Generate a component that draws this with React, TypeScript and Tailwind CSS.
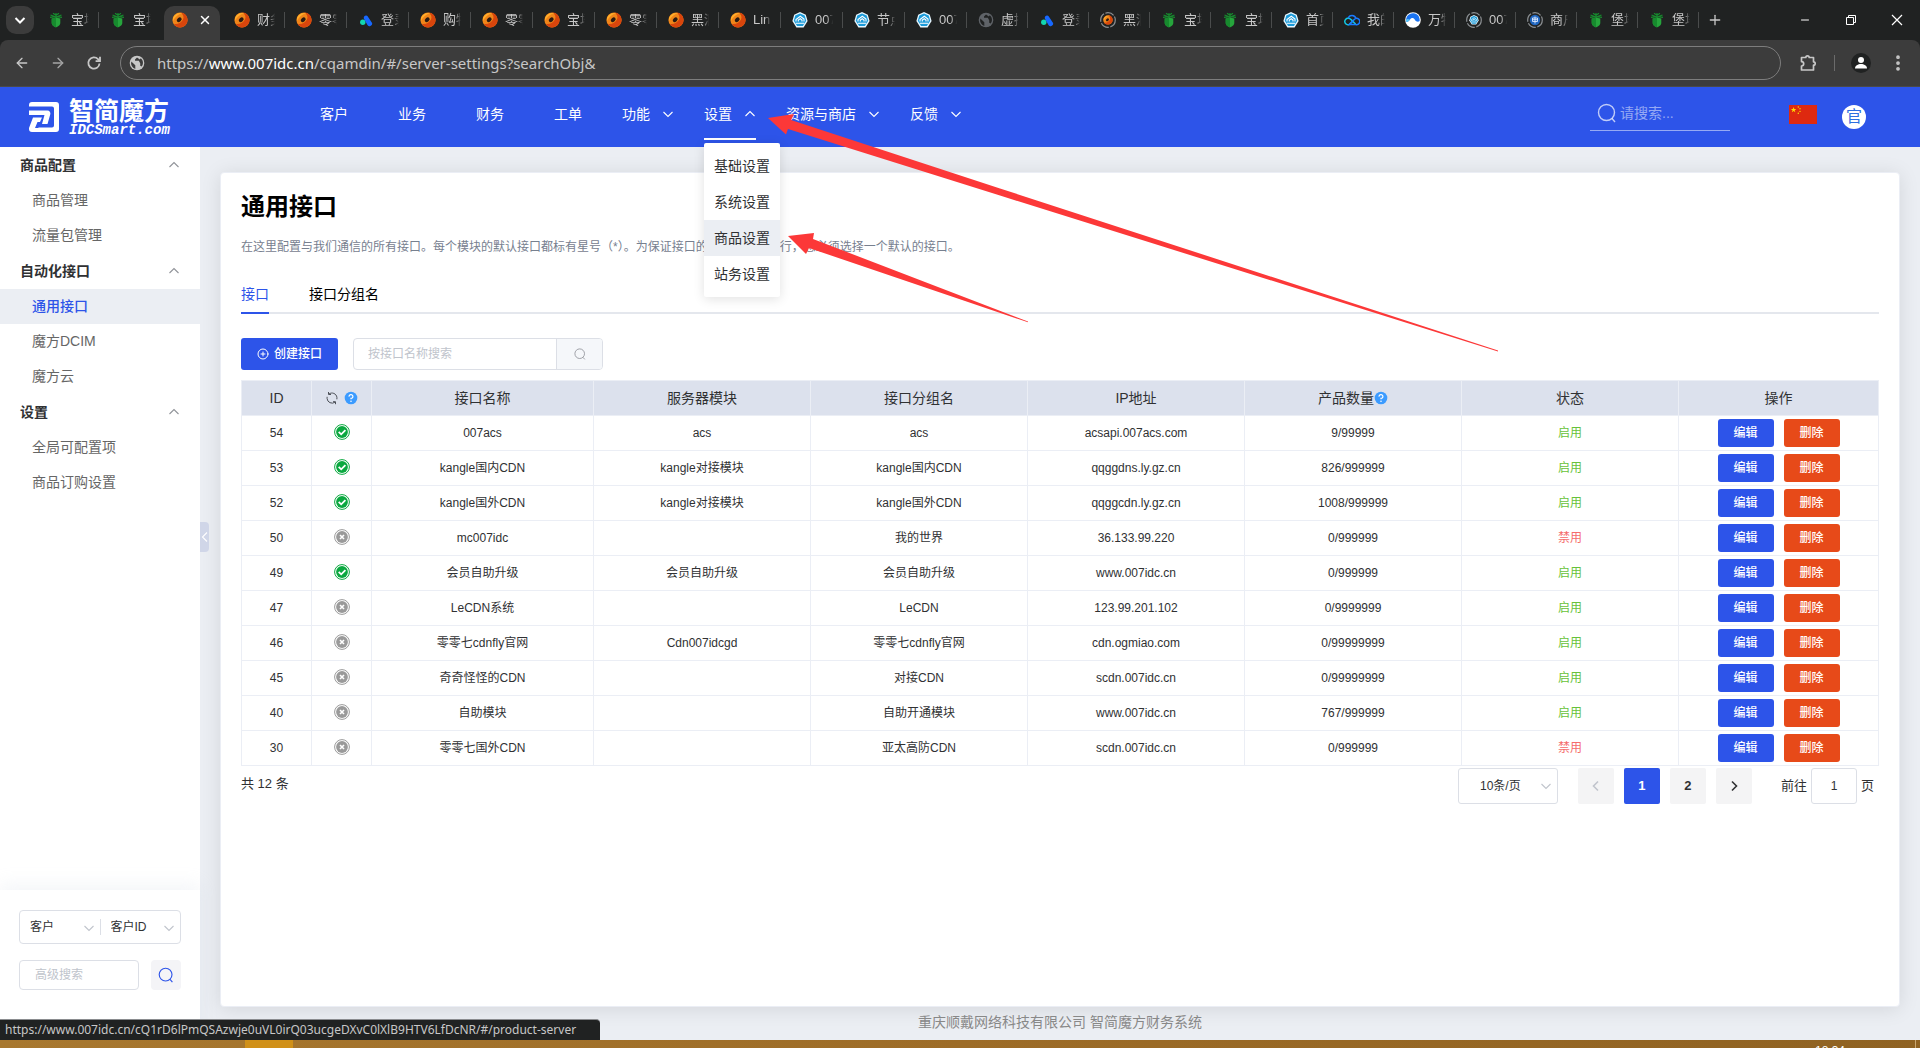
import React, { useState } from 'react';
import { ArrowLeft, ArrowRight, CirclePlus, EllipsisVertical, Minus, Plus, X } from 'lucide-react';

type IconKind =
  | 'bt'
  | 'ring'
  | 'peaks'
  | 'hex'
  | 'globe'
  | 'cloud'
  | 'wave'
  | 'ringDark'
  | 'hexDark'
  | 'gridDark';

const browserTabs: { icon: IconKind; title: string; active?: boolean }[] = [
  { icon: 'bt', title: '宝塔' },
  { icon: 'bt', title: '宝塔' },
  { icon: 'ring', title: '', active: true },
  { icon: 'ring', title: '财务' },
  { icon: 'ring', title: '零零' },
  { icon: 'peaks', title: '登录' },
  { icon: 'ring', title: '购物' },
  { icon: 'ring', title: '零零' },
  { icon: 'ring', title: '宝塔' },
  { icon: 'ring', title: '零零' },
  { icon: 'ring', title: '黑洞' },
  { icon: 'ring', title: 'Lin' },
  { icon: 'hex', title: '007' },
  { icon: 'hex', title: '节点' },
  { icon: 'hex', title: '007' },
  { icon: 'globe', title: '虚拟' },
  { icon: 'peaks', title: '登录' },
  { icon: 'ringDark', title: '黑洞' },
  { icon: 'bt', title: '宝塔' },
  { icon: 'bt', title: '宝塔' },
  { icon: 'hex', title: '首页' },
  { icon: 'cloud', title: '我的' },
  { icon: 'wave', title: '万物' },
  { icon: 'hexDark', title: '007' },
  { icon: 'gridDark', title: '商户' },
  { icon: 'bt', title: '堡塔' },
  { icon: 'bt', title: '堡塔' },
];

const simpleNav = ['客户', '业务', '财务', '工单'];
const menuNav = ['功能', '设置', '资源与商店', '反馈'];
const settingsMenu = ['基础设置', '系统设置', '商品设置', '站务设置'];

const sidebar = [
  { title: '商品配置', items: ['商品管理', '流量包管理'] },
  { title: '自动化接口', items: ['通用接口', '魔方DCIM', '魔方云'] },
  { title: '设置', items: ['全局可配置项', '商品订购设置'] },
];

const rows = [
  { id: 54, ok: true, name: '007acs', module: 'acs', group: 'acs', ip: 'acsapi.007acs.com', count: '9/99999', enabled: true },
  { id: 53, ok: true, name: 'kangle国内CDN', module: 'kangle对接模块', group: 'kangle国内CDN', ip: 'qqggdns.ly.gz.cn', count: '826/999999', enabled: true },
  { id: 52, ok: true, name: 'kangle国外CDN', module: 'kangle对接模块', group: 'kangle国外CDN', ip: 'qqggcdn.ly.gz.cn', count: '1008/999999', enabled: true },
  { id: 50, ok: false, name: 'mc007idc', module: '', group: '我的世界', ip: '36.133.99.220', count: '0/999999', enabled: false },
  { id: 49, ok: true, name: '会员自助升级', module: '会员自助升级', group: '会员自助升级', ip: 'www.007idc.cn', count: '0/999999', enabled: true },
  { id: 47, ok: false, name: 'LeCDN系统', module: '', group: 'LeCDN', ip: '123.99.201.102', count: '0/9999999', enabled: true },
  { id: 46, ok: false, name: '零零七cdnfly官网', module: 'Cdn007idcgd', group: '零零七cdnfly官网', ip: 'cdn.ogmiao.com', count: '0/99999999', enabled: true },
  { id: 45, ok: false, name: '奇奇怪怪的CDN', module: '', group: '对接CDN', ip: 'scdn.007idc.cn', count: '0/99999999', enabled: true },
  { id: 40, ok: false, name: '自助模块', module: '', group: '自助开通模块', ip: 'www.007idc.cn', count: '767/999999', enabled: true },
  { id: 30, ok: false, name: '零零七国外CDN', module: '', group: '亚太高防CDN', ip: 'scdn.007idc.cn', count: '0/999999', enabled: false },
];

const chevronPaths = {
  down: 'M1.500 4L6 8.500 10.500 4',
  up: 'M1.500 8L6 3.500 10.500 8',
  left: 'M8 1.500L3.500 6 8 10.500',
  right: 'M4 1.500L8.500 6 4 10.500',
};

function Chevron({ dir, className = '', weight = 1.1 }: { dir: keyof typeof chevronPaths; className?: string; weight?: number }) {
  return (
    <svg viewBox="0 0 12 12" className={`h-3 w-3 shrink-0 ${className}`} fill="none" stroke="currentColor" strokeWidth={weight} aria-hidden="true">
      <path d={chevronPaths[dir]} />
    </svg>
  );
}

function OrangeRing() {
  return (
    <>
      <ellipse cx="8" cy="8" rx="7.600" ry="7.400" fill="#f08519" />
      <path d="M8 .6c4.500 0 7.600 3.200 7.600 7.400S12 15.400 8 15.400c-2.500 0-5-1.200-6-3.400 4 .6 7.500-1.500 9-4.500 1.200-2.600.2-5.400-3-6.900z" fill="#d8450c" />
      <path d="M1 6C2.500 2 7 .5 10.500 1.300 7 2 3 4.500 1.200 9z" fill="#ffae2b" />
      <ellipse cx="7.200" cy="7.800" rx="2.700" ry="2" transform="rotate(-40 7.200 7.800)" fill="#2b1a12" />
    </>
  );
}

function HexMark() {
  return (
    <>
      <path d="M8 0l5.800 2.700L15.600 9l-4 6.400H4.400L.4 9l1.800-6.300z" fill="#e8f7ff" />
      <path d="M8 1.400l4.700 2.200L14.200 8.800 10.900 14H5.100L1.800 8.800l1.500-5.200z" fill="#1a9ad9" />
      <path d="M4 9.500V7.500L8.300 4.200 12 7v2.500M6.300 9.500V8l2-1.300L10 8v1.500M3.800 11.300h8.400" stroke="#fff" strokeWidth="1.100" fill="none" />
    </>
  );
}

function Favicon({ kind }: { kind: IconKind }) {
  return (
    <svg viewBox="0 0 16 16" className="h-4 w-4 shrink-0" aria-hidden="true">
      {kind === 'bt' && (
        <>
          <path d="M8 1v5M2.500 3l5.500 2 5.500-2M2 5.300l6-.6 6 .6M5 1.300l3 2 3-2" stroke="#178a2e" strokeWidth="1.200" fill="none" />
          <path d="M3.700 6.500L8 5.500l4.300 1V11c0 2.500-2.500 3.500-4.300 4.500C6.200 14.500 3.700 13.500 3.700 11z" fill="#26a53c" />
          <path d="M3.700 6.500L8 5.500v10C6.200 14.500 3.700 13.500 3.700 11z" fill="#178a2e" />
        </>
      )}
      {kind === 'ring' && <OrangeRing />}
      {kind === 'peaks' && (
        <>
          <circle cx="4.800" cy="10.200" r="2.700" fill="#12d6b0" />
          <path d="M8 3.500a2 2 0 0 1 1.800 1.100l3.600 5.400a2.500 2.500 0 1 1-4.200 2.600L5.800 6.500C5.500 4.500 6.800 3.500 8 3.500z" fill="#1768ff" />
        </>
      )}
      {kind === 'hex' && <HexMark />}
      {kind === 'globe' && (
        <>
          <circle cx="8" cy="8" r="7.300" fill="#5f6368" />
          <path d="M2.300 6.500l4 3.800v3.800A6.300 6.300 0 0 1 2.300 6.500zM8 2.500L6 4.500v1.300h3.800l1.400 2.400v2.600l1.500.6c2-2.500 1.700-6-.9-8.200l-1 1.300z" fill="#202222" />
        </>
      )}
      {kind === 'cloud' && (
        <>
          <path d="M8.300 9.500L5.500 12.300A3.200 3.200 0 1 1 4.200 6.300c1.500 0 2.300.7 3.200 1.600l4.300 4.400" stroke="#12c8e0" strokeWidth="1.500" fill="none" />
          <path d="M4.200 6.200a4 4 0 0 1 7.700.2 3.200 3.200 0 1 1-.2 6.200H5.200L11 6.800" stroke="#1a7bff" strokeWidth="1.500" fill="none" />
        </>
      )}
      {kind === 'wave' && (
        <>
          <circle cx="8" cy="8" r="7.800" fill="#fff" />
          <path d="M1.500 10C0 5 4 1 8.500 1.300c4 .2 6.500 3.500 6.200 7.700-1.700 1.500-3.700.5-4.700-1C8.500 5.500 6.500 5.500 5 7.500c-1 1.500-2 2.500-3.500 2.500z" fill="#1a73f0" />
          <path d="M1.500 10C3 10 4 9 5 7.500c-2.500-1-4-.5-4.200 1z" fill="#57c5f7" />
        </>
      )}
      {(kind === 'ringDark' || kind === 'hexDark' || kind === 'gridDark') && (
        <circle cx="8" cy="8" r="7.300" fill="none" stroke="#8b8f92" strokeWidth="1.200" strokeDasharray="9 1.500" />
      )}
      {kind === 'ringDark' && (
        <g transform="translate(3 3) scale(.62)">
          <OrangeRing />
        </g>
      )}
      {kind === 'hexDark' && (
        <g transform="translate(3 3) scale(.62)">
          <HexMark />
        </g>
      )}
      {kind === 'gridDark' && (
        <>
          <circle cx="8" cy="8" r="5.200" fill="#1f66c0" />
          <path d="M5.500 6h5v3.500h-5zM8 4.500v7M5.500 7.700h5" stroke="#dbe9ff" strokeWidth=".9" fill="none" />
        </>
      )}
    </svg>
  );
}

function SearchIcon({ className }: { className?: string }) {
  return (
    <svg viewBox="0 0 20 20" className={className} fill="none" stroke="currentColor" aria-hidden="true">
      <circle cx="9.500" cy="9.500" r="8" strokeWidth="1.400" />
      <path d="M15 15.500l3 3.500" strokeWidth="1.400" />
    </svg>
  );
}

function QuestionIcon() {
  return (
    <svg viewBox="0 0 14 14" className="h-[14px] w-[14px]" aria-hidden="true">
      <circle cx="7" cy="7" r="6.300" fill="#3c9bff" />
      <path d="M5.100 5.600A1.900 1.900 0 1 1 7 7.400v.9" stroke="#fff" strokeWidth="1.200" fill="none" />
      <circle cx="7" cy="10.200" r=".8" fill="#fff" />
    </svg>
  );
}

function RefreshIcon() {
  return (
    <svg viewBox="0 0 14 14" className="h-[14px] w-[14px]" fill="none" stroke="#4d5159" aria-hidden="true">
      <path d="M4 3a5 5 0 0 1 7.900 3.300M10 11.200A5 5 0 0 1 2.100 7.600" />
      <path d="M3.500 1v2.500H6M10.500 13.200v-2.500H8" />
      <path d="M2.100 7.600V5.800M11.900 6.300v2" />
    </svg>
  );
}

function StatusIcon({ ok }: { ok: boolean }) {
  const color = ok ? '#0aa83f' : '#9a9a9a';
  return (
    <svg viewBox="0 0 16 16" className="mx-auto h-4 w-4" role="img" aria-label={ok ? '正常' : '异常'}>
      <circle cx="8" cy="8" r="7.400" fill="#fff" stroke={color} strokeWidth="1" />
      <circle cx="8" cy="8" r="5.900" fill={color} />
      {ok ? (
        <path d="M4.700 7.800l2.500 2.500 4.200-4.200" stroke="#fff" strokeWidth="1.800" fill="none" />
      ) : (
        <path d="M6 6l4 4M10 6l-4 4" stroke="#fff" strokeWidth="1.600" />
      )}
    </svg>
  );
}

function BrowserChrome() {
  return (
    <div className="bg-[#202222] text-[#c7c7c7]">
      <div className="flex h-10 items-center">
        <div className="w-[37px] shrink-0 pl-[6px]">
          <button type="button" aria-label="搜索标签页" className="flex h-7 w-7 items-center justify-center rounded-[10px] bg-[#3c3c3c] text-white">
            <Chevron dir="down" weight={2} />
          </button>
        </div>
        <div className="flex h-full min-w-0 flex-1 items-end">
          {browserTabs.map((tab, i) => (
            // spare pixels go to the leading tabs
            <div key={i} className={`relative h-[34px] min-w-0 ${i < 15 ? 'w-[62px]' : 'w-[61px]'}`}>
              {tab.active ? (
                <div className="mx-[3px] flex h-full items-center justify-between rounded-t-[10px] bg-[#3c3c3c] px-2 pb-[6px]">
                  <Favicon kind={tab.icon} />
                  <button type="button" aria-label="关闭" className="text-white">
                    <X className="h-[14px] w-[14px]" strokeWidth={2.5} />
                  </button>
                </div>
              ) : (
                <div className="flex h-full items-center gap-[7px] pb-[6px] pl-[11px]">
                  <Favicon kind={tab.icon} />
                  <span className="w-[18px] overflow-hidden text-[13px] leading-4 whitespace-nowrap [mask-image:linear-gradient(to_right,#000_65%,transparent)]">
                    {tab.title}
                  </span>
                </div>
              )}
              {!tab.active && i !== 1 && <span className="absolute top-[6px] right-0 h-4 w-px bg-[#4a4c4c]" />}
            </div>
          ))}
        </div>
        <button type="button" aria-label="新标签页" className="mr-[51px] flex w-8 justify-center">
          <Plus className="h-4 w-4" />
        </button>
        <div className="flex text-white">
          <button type="button" aria-label="最小化" className="flex w-[46px] justify-center">
            <Minus className="h-3 w-3" />
          </button>
          <button type="button" aria-label="还原" className="flex w-[46px] justify-center">
            <svg viewBox="0 0 12 12" className="h-3 w-3" fill="none" stroke="currentColor">
              <path d="M1.500 3.500h7v7h-7zM3.500 3.500v-2h7v7h-2" />
            </svg>
          </button>
          <button type="button" aria-label="关闭窗口" className="flex w-[46px] justify-center">
            <svg viewBox="0 0 12 12" className="h-3 w-3" fill="none" stroke="currentColor">
              <path d="M1 1l10 10M11 1L1 11" strokeWidth="1.200" />
            </svg>
          </button>
        </div>
      </div>
      <div className="flex h-[47px] items-center rounded-t-lg border-b border-[#4a4a48] bg-[#3c3c3c] pl-[14px]">
        <div className="flex gap-5">
          <ArrowLeft className="h-4 w-4" />
          <ArrowRight className="h-4 w-4 text-[#a5a5a5]" />
          <svg viewBox="0 0 16 16" className="h-4 w-4" fill="none" stroke="currentColor" strokeWidth="1.800">
            <path d="M13.500 8.500A5.600 5.600 0 1 1 12 4.200L13.500 5.800" />
            <path d="M14 1.800v4.400H9.600" />
          </svg>
        </div>
        <div className="ml-[18px] flex h-[34px] flex-1 items-center rounded-full border border-[#7d7d7d] pl-2">
          <svg viewBox="0 0 16 16" className="h-4 w-4" aria-hidden="true">
            <circle cx="8" cy="8" r="7.300" fill="#c7c7c7" />
            <path d="M2.300 6.500l4 3.800v3.800A6.300 6.300 0 0 1 2.300 6.500zM8 2.500L6 4.500v1.300h3.800l1.400 2.400v2.600l1.500.6c2-2.500 1.700-6-.9-8.200l-1 1.300z" fill="#3c3c3c" />
          </svg>
          <span className="ml-3 font-['Noto_Sans','Noto_Sans_CJK_SC',sans-serif] text-[15px] leading-5">
            https://<span className="text-white">www.007idc.cn</span>/cqamdin/#/server-settings?searchObj&amp;
          </span>
        </div>
        <svg viewBox="0 0 18 18" className="ml-[18px] h-[18px] w-[18px]" fill="none" stroke="currentColor" strokeWidth="1.700" strokeLinejoin="round">
          <path d="M2.500 3.500h4.300a1.700 1.700 0 0 1 3.400 0h4.300v4.300a1.700 1.700 0 0 1 0 3.400v4.800h-12v-4a2.200 2.200 0 0 0 0-4.400z" />
        </svg>
        <span className="ml-[17px] h-4 w-px bg-[#6b6b6b]" />
        <span className="ml-[16px] flex h-5 w-5 items-center justify-center rounded-full bg-[#202222]">
          <svg viewBox="0 0 14 14" className="h-[14px] w-[14px]" fill="#fff">
            <circle cx="7" cy="4" r="3" />
            <path d="M1 12.500c0-3 3-4.500 6-4.500s6 1.500 6 4.500z" />
          </svg>
        </span>
        <EllipsisVertical className="mr-3 ml-[17px] h-5 w-5" strokeWidth={2.5} />
      </div>
    </div>
  );
}

function SettingsDropdown() {
  return (
    <ul className="absolute top-14 left-0 z-20 w-[76px] rounded-[2px] bg-white py-[5px] shadow-[0_2px_12px_rgba(0,0,0,0.12)]">
      {settingsMenu.map((item) => (
        <li key={item}>
          <a
            href="#"
            className={`block px-[10px] leading-9 whitespace-nowrap text-[#303133] ${item === '商品设置' ? 'bg-[#ebeef3]' : ''}`}
          >
            {item}
          </a>
        </li>
      ))}
    </ul>
  );
}

function SiteHeader() {
  return (
    <header className="flex h-[60px] bg-[#2d54e9] text-sm text-white">
      <a href="#" className="flex w-[295px] shrink-0 items-center gap-[10px] pl-[29px]">
        <svg viewBox="0 0 30 30" className="h-[30px] w-[30px]" aria-hidden="true">
          <path d="M3 0h24a3 3 0 0 1 3 3v24a3 3 0 0 1-3 3H8l1.500-4.500H23a2 2 0 0 0 2-2V6.500a2 2 0 0 0-2-2H0V3a3 3 0 0 1 3-3z" fill="#fff" />
          <path d="M0 8.500h18.500a3 3 0 0 1 2.800 3.800L18.500 22H13l2.500-9H0z" fill="#fff" />
          <path d="M4 15.500h9L11 20H8.500L6 26h6v4H3a3 3 0 0 1-3-3v-1z" fill="#fff" />
        </svg>
        <span className="flex flex-col">
          <span className="text-[25px] leading-[25px] font-bold">智简魔方</span>
          <span className="font-['Liberation_Mono',monospace] text-sm leading-3 font-bold italic">IDCSmart.com</span>
        </span>
      </a>
      <nav className="flex h-[53px]">
        {simpleNav.map((item) => (
          <a key={item} href="#" className="flex items-center px-[25px]">
            {item}
          </a>
        ))}
        <div className="-ml-[10px] flex">
          {menuNav.map((item) => {
            const open = item === '设置';
            return (
              <div key={item} className="relative -mr-5 flex px-[25px]">
                <a
                  href="#"
                  className={`flex items-center gap-3 border-b-2 pt-[2px] ${open ? 'border-white' : 'border-transparent'}`}
                >
                  {item}
                  <Chevron dir={open ? 'up' : 'down'} />
                </a>
                {open && (
                  <div className="absolute top-0 left-[25px]">
                    <SettingsDropdown />
                  </div>
                )}
              </div>
            );
          })}
        </div>
      </nav>
      <label className="mt-2 ml-auto flex h-9 w-[140px] items-center gap-[3px] self-start border-b border-white/50 pl-[7px]">
        <SearchIcon className="h-5 w-5 shrink-0 text-white/70" />
        <input type="text" placeholder="请搜索..." aria-label="搜索" className="w-full min-w-0 bg-transparent outline-none placeholder:text-white/50" />
      </label>
      <svg viewBox="0 0 28 19" className="mt-[18px] ml-[59px] h-[19px] w-7" role="img" aria-label="中文">
        <path d="M0 0h28v19H0z" fill="#de2910" />
        <path d="M4.600 2l.7 2h2.100L5.700 5.300l.6 2-1.700-1.200-1.700 1.200.6-2L1.800 4h2.100z" fill="#ffde00" />
        <circle cx="9.300" cy="2" r=".7" fill="#ffde00" />
        <circle cx="11" cy="3.800" r=".7" fill="#ffde00" />
        <circle cx="11" cy="6.400" r=".7" fill="#ffde00" />
        <circle cx="9.300" cy="8.300" r=".7" fill="#ffde00" />
      </svg>
      <span className="mt-[18px] mr-[54px] ml-[25px] flex h-6 w-6 items-center justify-center rounded-full bg-white text-base leading-none text-[#2d6fe0]">
        官
      </span>
    </header>
  );
}

function Sidebar() {
  return (
    <aside className="flex w-[200px] shrink-0 flex-col bg-white text-sm">
      <nav className="flex-1">
        {sidebar.map((section) => (
          <div key={section.title}>
            <button type="button" className="flex h-9 w-full items-center justify-between px-5 font-bold text-[#303133]">
              {section.title}
              <Chevron dir="up" className="text-[#909399]" />
            </button>
            {section.items.map((item) => (
              <a
                key={item}
                href="#"
                className={`block pl-8 leading-[35px] ${
                  item === '通用接口' ? 'bg-[#ebeef3] font-medium text-[#2d54e9]' : 'text-[#666]'
                }`}
              >
                {item}
              </a>
            ))}
          </div>
        ))}
      </nav>
      <div className="px-[19px] pt-5 pb-[50px] text-xs text-[#303133] shadow-[0_-6px_16px_rgba(200,208,225,0.2)]">
        <div className="flex h-[34px] items-center rounded border border-[#dcdfe6]">
          <div className="relative flex-1">
            <select aria-label="类型" className="w-full appearance-none bg-transparent pl-[10px] outline-none">
              <option>客户</option>
            </select>
            <Chevron dir="down" className="pointer-events-none absolute top-[3px] right-[5px] text-[#c0c4cc]" />
          </div>
          <span className="h-4 w-px bg-[#dcdfe6]" />
          <div className="relative flex-1">
            <select aria-label="字段" className="w-full appearance-none bg-transparent pl-[10px] outline-none">
              <option>客户ID</option>
            </select>
            <Chevron dir="down" className="pointer-events-none absolute top-[3px] right-[5px] text-[#c0c4cc]" />
          </div>
        </div>
        <div className="mt-4 flex items-center gap-3">
          <input
            type="text"
            placeholder="高级搜索"
            aria-label="高级搜索"
            className="h-[30px] w-full min-w-0 rounded border border-[#dcdfe6] px-[15px] outline-none placeholder:text-[#c0c4cc]"
          />
          <button type="button" aria-label="搜索" className="flex h-[30px] w-[30px] shrink-0 items-center justify-center rounded bg-[#f4f4f7] text-[#2d54e9]">
            <SearchIcon className="h-4 w-4" />
          </button>
        </div>
      </div>
    </aside>
  );
}

function InterfaceTable() {
  return (
    <table className="w-full table-fixed border-collapse text-center text-xs text-[#303133] [&_td]:border [&_td]:border-[#ebeef5] [&_th]:border [&_th]:border-[#ebeef5]">
      <colgroup>
        <col className="w-[70px]" />
        <col className="w-[60px]" />
        <col className="w-[222px]" />
        <col />
        <col />
        <col />
        <col />
        <col />
        <col className="w-[200px]" />
      </colgroup>
      <thead>
        <tr className="h-[35px] bg-[#dce1ed] text-sm [&>th]:font-normal">
          <th>ID</th>
          <th>
            <span className="flex items-center justify-center gap-[5px]">
              <RefreshIcon />
              <QuestionIcon />
            </span>
          </th>
          <th>接口名称</th>
          <th>服务器模块</th>
          <th>接口分组名</th>
          <th>IP地址</th>
          <th>
            <span className="flex items-center justify-center">
              产品数量
              <QuestionIcon />
            </span>
          </th>
          <th>状态</th>
          <th>操作</th>
        </tr>
      </thead>
      <tbody>
        {rows.map((row) => (
          <tr key={row.id} className="h-[35px]">
            <td>{row.id}</td>
            <td className="pb-[2px]">
              <StatusIcon ok={row.ok} />
            </td>
            <td>{row.name}</td>
            <td>{row.module}</td>
            <td>{row.group}</td>
            <td>{row.ip}</td>
            <td>{row.count}</td>
            <td className={row.enabled ? 'text-[#67c23a]' : 'text-[#f56c6c]'}>{row.enabled ? '启用' : '禁用'}</td>
            <td>
              <span className="flex justify-center gap-[10px] font-medium text-white">
                <button type="button" className="h-7 w-14 rounded-[3px] bg-[#2d54e9]">
                  编辑
                </button>
                <button type="button" className="h-7 w-14 rounded-[3px] bg-[#e74a19]">
                  删除
                </button>
              </span>
            </td>
          </tr>
        ))}
      </tbody>
    </table>
  );
}

function Pagination() {
  const [page, setPage] = useState(1);
  return (
    <div className="mt-[2px] flex items-center text-[13px] text-[#303133]">
      <span className="pb-1">共 12 条</span>
      <div className="relative ml-auto w-[100px]">
        <select aria-label="每页条数" className="h-9 w-full appearance-none rounded-[3px] border border-[#dcdfe6] bg-white pl-[21px] text-xs outline-none">
          <option>10条/页</option>
        </select>
        <Chevron dir="down" className="pointer-events-none absolute top-3 right-[6px] text-[#c0c4cc]" />
      </div>
      <div className="ml-5 flex gap-[10px] font-bold">
        <button type="button" aria-label="上一页" className="flex h-9 w-9 items-center justify-center rounded-[2px] bg-[#f4f4f5] text-[#c0c4cc]">
          <Chevron dir="left" weight={1.6} />
        </button>
        {[1, 2].map((n) => (
          <button
            key={n}
            type="button"
            onClick={() => setPage(n)}
            className={`h-9 w-9 rounded-[2px] ${n === page ? 'bg-[#2d54e9] text-white' : 'bg-[#f4f4f5]'}`}
          >
            {n}
          </button>
        ))}
        <button type="button" aria-label="下一页" className="flex h-9 w-9 items-center justify-center rounded-[2px] bg-[#f4f4f5]">
          <Chevron dir="right" weight={1.6} />
        </button>
      </div>
      <label className="mr-[5px] ml-[29px] flex items-center gap-1">
        前往
        <input type="text" defaultValue="1" className="h-9 w-[46px] rounded-[3px] border border-[#dcdfe6] text-center text-xs outline-none" />
        页
      </label>
    </div>
  );
}

export default function App() {
  return (
    <div className="relative flex min-h-screen flex-col overflow-hidden bg-[#ebeef3] font-['Liberation_Sans','Noto_Sans_CJK_SC',sans-serif]">
      <BrowserChrome />
      <SiteHeader />
      <div className="flex flex-1">
        <Sidebar />
        <main className="relative flex min-w-0 flex-1 flex-col px-5 pt-[25px]">
          <button type="button" aria-label="收起菜单" className="absolute top-[42%] left-0 flex h-[30px] w-[9px] items-center justify-center rounded-r bg-[#d0d6e8] text-white">
            <Chevron dir="left" />
          </button>
          <section className="flex-1 rounded border border-[#ebeef5] bg-white p-5 shadow-[0_2px_20px_rgba(0,0,0,0.1)]">
            <h1 className="text-2xl leading-7 font-bold text-black">通用接口</h1>
            <p className="mt-4 text-xs leading-5 text-[#77808f]">
              在这里配置与我们通信的所有接口。每个模块的默认接口都标有星号（*）。为保证接口的正常稳定地运行，您必须选择一个默认的接口。
            </p>
            <div className="mt-5 flex h-[37px] gap-10 border-b-2 border-[#e4e7ed] text-sm">
              <button type="button" className="-mb-[2px] border-b-2 border-[#2d54e9] pb-px text-[#2d54e9]">
                接口
              </button>
              <button type="button" className="-mb-[2px] border-b-2 border-transparent pb-px text-black">
                接口分组名
              </button>
            </div>
            <div className="mt-6 flex h-8 gap-[15px] text-xs">
              <button type="button" className="flex items-center gap-[5px] rounded-[3px] bg-[#2d54e9] px-4 font-medium text-white">
                <CirclePlus className="h-3 w-3" />
                创建接口
              </button>
              <div className="flex w-[250px] overflow-hidden rounded border border-[#dcdfe6]">
                <input
                  type="text"
                  placeholder="按接口名称搜索"
                  aria-label="按接口名称搜索"
                  className="w-full min-w-0 pl-[14px] outline-none placeholder:text-[#c0c4cc]"
                />
                <button type="button" aria-label="搜索" className="flex w-[46px] shrink-0 items-center justify-center border-l border-[#dcdfe6] bg-[#f5f7fa] text-[#909399]">
                  <SearchIcon className="h-3 w-3" />
                </button>
              </div>
            </div>
            <div className="mt-[10px]">
              <InterfaceTable />
            </div>
            <Pagination />
          </section>
          <footer className="pb-[3px] text-center text-sm leading-[30px] text-[#888]">重庆顺戴网络科技有限公司 智简魔方财务系统</footer>
        </main>
      </div>

      <div className="relative flex h-2 overflow-hidden bg-linear-to-r from-[#a8782f] via-[#9d6c27] to-[#8f6222] pl-[245px]">
        <span className="h-full w-12 bg-[#d09018]" />
        <span className="mr-[70px] ml-auto pt-[5px] text-xs leading-3 text-white">18:34</span>
        <span className="mr-1 h-full w-px bg-[#c9a772]" />
      </div>

      <div className="absolute bottom-2 left-0 z-10 h-[21px] rounded-tr border-t border-[#8a8c8f] bg-[#202222] pr-6 pl-[5px] font-['Noto_Sans',sans-serif] text-xs leading-5 text-[#c7c7c7]">
        https://www.007idc.cn/cQ1rD6lPmQSAzwje0uVL0irQ03ucgeDXvC0lXlB9HTV6LfDcNR/#/product-server
      </div>

      {/* hint arrows */}
      <svg className="pointer-events-none absolute top-0 left-0 z-30 h-[400px] w-[1520px]" viewBox="0 0 1520 400" fill="#fc3838" aria-hidden="true">
        <path d="M768 118L794 114L791 120L1000 188.500L1498 350.500L1498 351.500L1000 195.500L788 129L786 134.500Z" />
        <path d="M788 236L814 233L813 239L1028 321.500L1028 322.300L809 248L806 254Z" />
      </svg>
    </div>
  );
}
